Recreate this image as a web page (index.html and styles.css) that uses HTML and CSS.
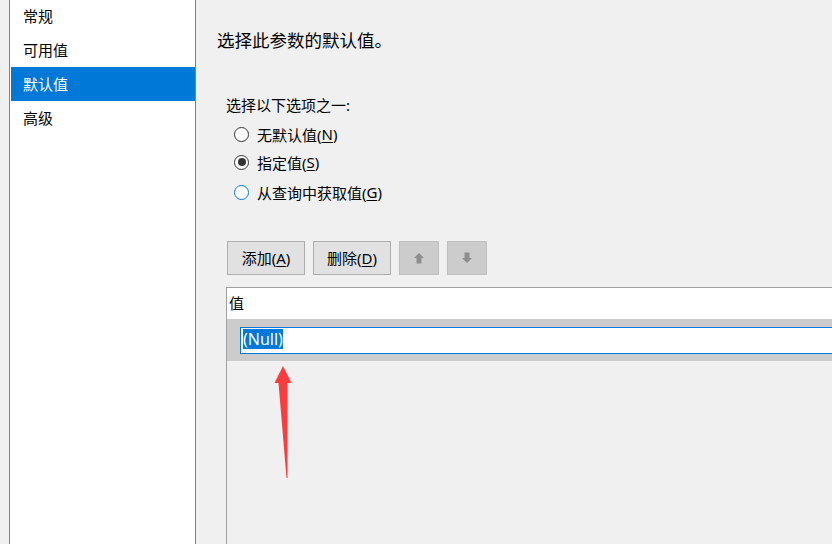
FILE: index.html
```html
<!DOCTYPE html>
<html lang="zh-CN">
<head>
    <meta charset="UTF-8">
    <title>参数属性 - 默认值</title>
    <link rel="stylesheet" href="styles.css">
</head>
<body>
    <div class="sidebar">
        <div class="nav-list">
            <div class="nav-item">常规</div>
            <div class="nav-item">可用值</div>
            <div class="nav-item selected">默认值</div>
            <div class="nav-item">高级</div>
        </div>
    </div>

    <div class="main">
        <div class="heading">选择此参数的默认值。</div>

        <div class="options">
            <div class="options-title">选择以下选项之一:</div>
            <div class="option"><span class="radio"></span>无默认值(<u>N</u>)</div>
            <div class="option"><span class="radio checked"></span>指定值(<u>S</u>)</div>
            <div class="option last"><span class="radio hover"></span>从查询中获取值(<u>G</u>)</div>
        </div>

        <div class="toolbar">
            <div class="button">添加(<u>A</u>)</div>
            <div class="button">删除(<u>D</u>)</div>
            <div class="button small disabled">
                <svg class="move-icon" width="12" height="12" viewBox="0 0 12 12">
                    <path d="M6 1 L11 6 L8.5 6 L8.5 11.5 L3.5 11.5 L3.5 6 L1 6 Z"/>
                </svg>
            </div>
            <div class="button small disabled">
                <svg class="move-icon" width="12" height="12" viewBox="0 0 12 12">
                    <path d="M6 11 L11 6 L8.5 6 L8.5 0.5 L3.5 0.5 L3.5 6 L1 6 Z"/>
                </svg>
            </div>
        </div>

        <div class="grid">
            <div class="grid-header">值</div>
            <div class="grid-row">
                <div class="editor"><span class="selection">(Null)</span></div>
            </div>

            <!-- red annotation arrow pointing at the value -->
            <svg class="annotation" width="40" height="130" viewBox="0 0 40 130">
                <polygon points="16,8 24.5,25 20.5,25 20.5,120 19.5,120 11.5,25 7.5,25"/>
            </svg>
        </div>
    </div>
</body>
</html>
```

FILE: styles.css
```css
body {
    margin: 0;
    padding: 0;
    font-family: "Noto Sans", "Noto Sans CJK SC", sans-serif;
    font-size: 15px;
    color: #000;
    background-color: #f0f0f0;
    height: 100vh;
    display: flex;
    overflow: hidden;
}

u {
    text-decoration-thickness: 1px;
    text-underline-offset: 2px;
}

/* Left navigation */
.sidebar {
    margin-left: 9px;
    width: 184px;
    padding-left: 1px;
    background-color: #fff;
    border-left: 1px solid #828282;
    border-right: 1px solid #828282;
    flex-shrink: 0;
}

.nav-list {
    margin-top: -1px;
}

.nav-item {
    height: 34px;
    line-height: 34px;
    padding-left: 12px;
}

.nav-item.selected {
    background-color: #0078d7;
    color: #fff;
}

/* Main panel */
.main {
    flex: 1;
    display: flex;
    flex-direction: column;
    padding-top: 28px;
    padding-left: 21px;
    min-width: 0;
}

.heading {
    font-size: 17.5px;
    line-height: 24px;
}

.options {
    margin-top: 43px;
    margin-left: 9px;
}

.options-title {
    line-height: 20px;
    margin-bottom: 5px;
}

.option {
    display: flex;
    align-items: center;
    height: 28px;
    padding-left: 8px;
}

.option.last {
    margin-top: 2px;
}

.radio {
    width: 15px;
    height: 15px;
    box-sizing: border-box;
    border: 1px solid #333;
    border-radius: 50%;
    background-color: #fff;
    margin-right: 8px;
    display: flex;
    align-items: center;
    justify-content: center;
}

.radio.checked::after {
    content: "";
    width: 8px;
    height: 8px;
    border-radius: 50%;
    background-color: #333;
}

.radio.hover {
    border-color: #0078d7;
}

/* Buttons */
.toolbar {
    display: flex;
    gap: 8px;
    margin-top: 35px;
    margin-left: 10px;
}

.button {
    width: 78px;
    height: 34px;
    box-sizing: border-box;
    background-color: #e1e1e1;
    border: 1px solid #adadad;
    display: flex;
    align-items: center;
    justify-content: center;
    line-height: 20px;
}

.button.small {
    width: 40px;
}

.button.disabled {
    background-color: #cccccc;
    border-color: #bfbfbf;
}

.move-icon {
    fill: #8e8e8e;
    filter: blur(0.5px);
}

/* Value grid */
.grid {
    position: relative;
    flex: 1;
    margin-top: 12px;
    margin-left: 9px;
    border-top: 1px solid #a0a0a0;
    border-left: 1px solid #a0a0a0;
}

.grid-header {
    height: 31px;
    line-height: 31px;
    padding-left: 2px;
    background-color: #fff;
}

.grid-row {
    height: 42px;
    box-sizing: border-box;
    padding: 8px 0 7px 13px;
    background-color: #cccccc;
}

.editor {
    height: 27px;
    box-sizing: border-box;
    border: 1px solid #0078d7;
    border-right: none;
    background-color: #fff;
    padding: 1px 0 0 2px;
}

.selection {
    display: inline-block;
    height: 20px;
    line-height: 20px;
    font-size: 16px;
    background-color: #0078d7;
    color: #fff;
}

.annotation {
    position: absolute;
    left: 40px;
    top: 70px;
    fill: #fa3c3c;
}
```
